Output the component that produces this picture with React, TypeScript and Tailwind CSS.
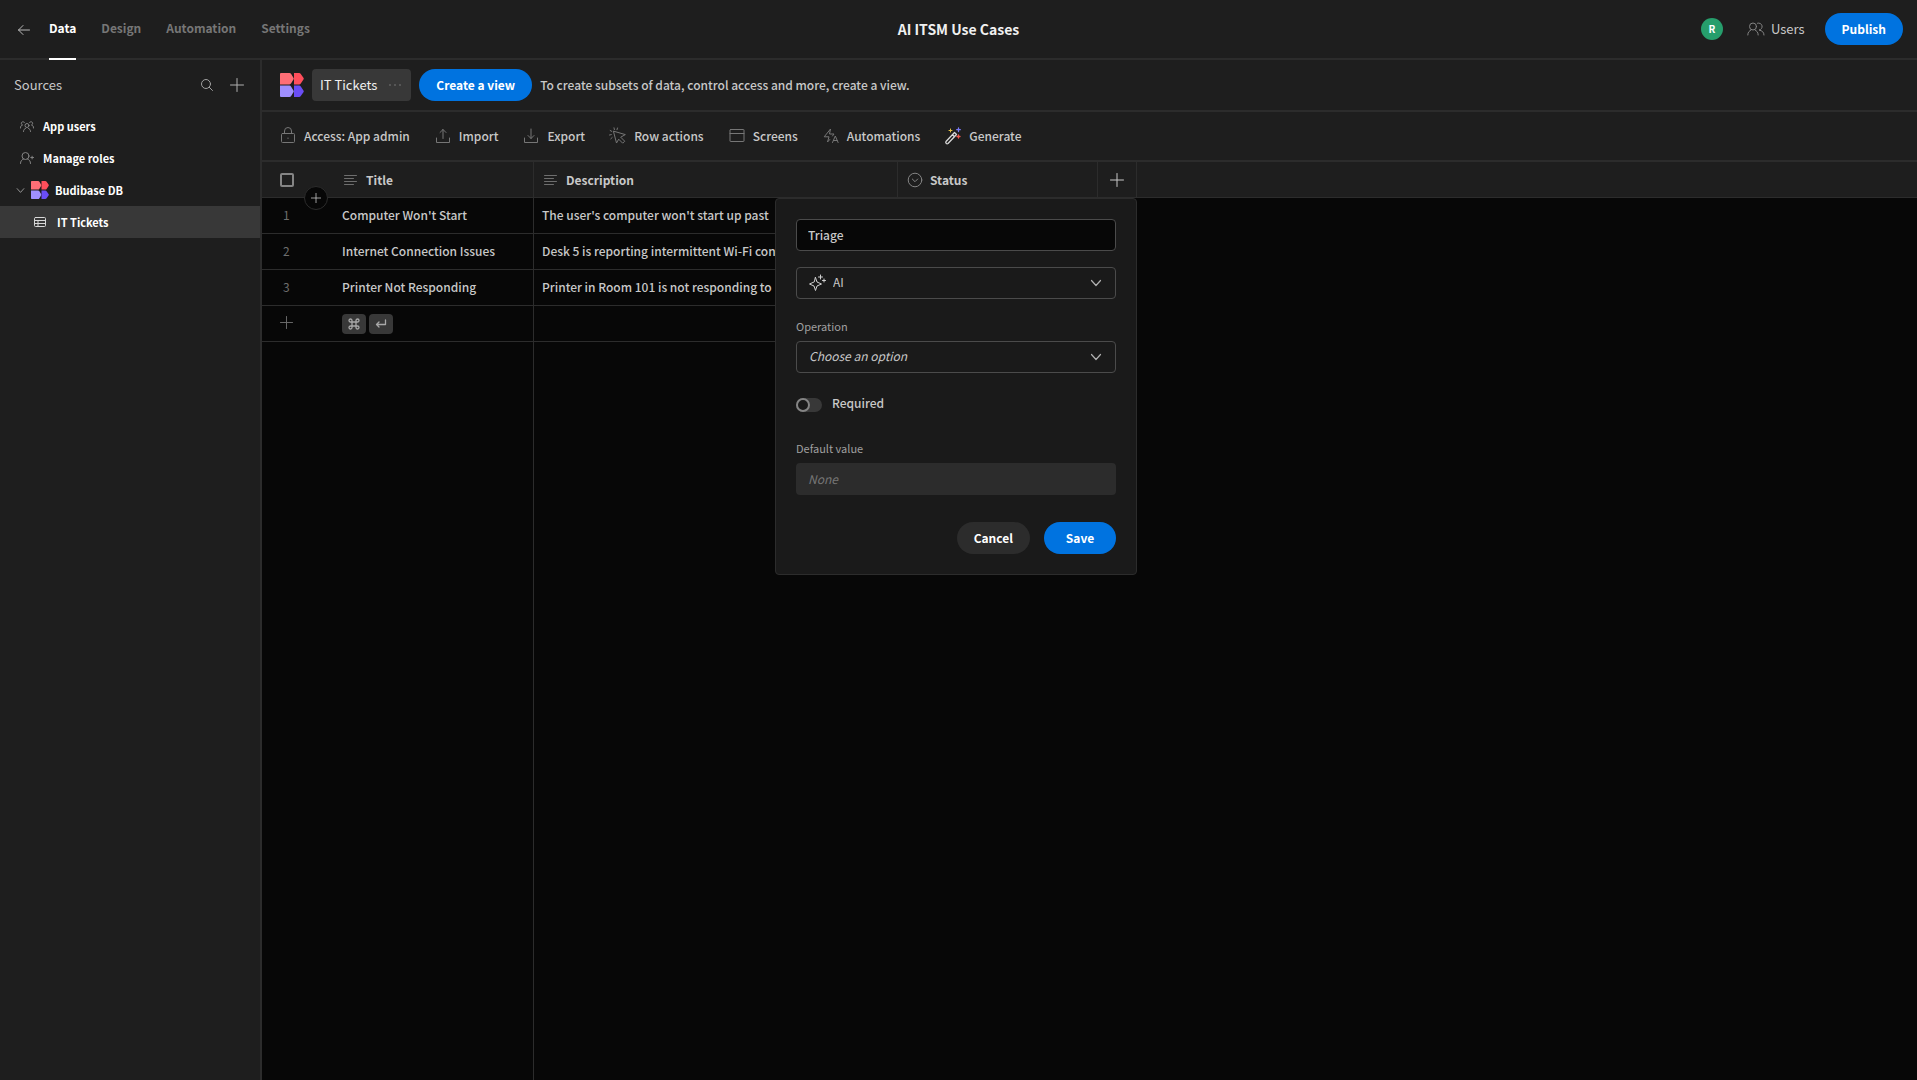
import { useState, type ReactNode } from "react";

function Glyph({ size, box = 20, className = "", children }: { size: string; box?: number; className?: string; children: ReactNode }) {
  return (
    <svg
      viewBox={`0 0 ${box} ${box}`}
      className={`shrink-0 ${size} ${className}`}
      fill="none"
      stroke="currentColor"
      strokeWidth="1"
      strokeLinecap="round"
      strokeLinejoin="round"
      aria-hidden="true"
    >
      {children}
    </svg>
  );
}

function Logo({ size }: { size: string }) {
  return (
    <svg viewBox="0 0 24 24" className={`shrink-0 ${size}`} aria-hidden="true">
      <path d="M0 1 Q0 0 1 0 H9.500 Q10.500 0 11 .8 L13.600 5 Q14 5.700 13.600 6.300 L11 10.600 Q10.500 11.400 9.500 11.400 H0 Z" fill="#ff6e76" />
      <path d="M14 0 H19 Q20.200 0 20.800 .9 L23.600 5 Q24 5.700 23.600 6.300 L20.800 10.500 Q20.200 11.400 19 11.400 H14 Z" fill="#ff4e5b" />
      <path d="M0 12.600 H9.500 Q10.500 12.600 11 13.400 L13.600 17.700 Q14 18.300 13.600 19 L11 23.200 Q10.500 24 9.500 24 H1 Q0 24 0 23 Z" fill="#9f8fff" />
      <path d="M14 12.600 H19 Q20.200 12.600 20.800 13.500 L23.600 17.700 Q24 18.300 23.600 19 L20.800 23.100 Q20.200 24 19 24 H14 Z" fill="#6a4df5" />
    </svg>
  );
}

const Plus = ({ size, className }: { size: string; className?: string }) => (
  <Glyph size={size} box={14} className={className}><path d="M7 .5v13M.5 7h13" /></Glyph>
);
const Chevron = ({ size, className }: { size: string; className?: string }) => (
  <Glyph size={size} box={12} className={className}><path strokeWidth="1.200" d="M1.500 3.500 6 8.500l4.500-5" /></Glyph>
);
const TextLines = () => (
  <Glyph size="size-4" box={16} className="text-[#6e6e6e]"><path d="M1.500 3.500h12M1.500 6.500h9M1.500 9.500h12M1.500 12.500h9" /></Glyph>
);

const tools: { label: string; icon: ReactNode }[] = [
  { label: "Access: App admin", icon: <><rect x="3.500" y="7.500" width="13" height="9" rx="1" /><path d="M6.500 7.500V5a3.500 3.500 0 0 1 7 0v2.500M10 12v.5" /></> },
  { label: "Import", icon: <path d="M3.500 12v4.500h13V12M10 12.500v-9M7 6.500l3-3 3 3" /> },
  { label: "Export", icon: <path d="M3.500 12v4.500h13V12M10 3v9.500M7 9.500l3 3 3-3" /> },
  { label: "Row actions", icon: <path d="M5.500 5.500l3 11.500 2.200-3.800 4 4 2-2-4-4L17 8.800zM9.500 2 9 3.700M6 1.800l.4 1.800M2.200 4.500l1.600.9M1.500 9l1.800-.4M2.800 12.800l1.400-1.300" /> },
  { label: "Screens", icon: <><rect x="3" y="3.500" width="14" height="12" rx=".5" /><path d="M3 7.500h14" /></> },
  { label: "Automations", icon: <path d="M8.800 13.500 6.500 16 8 10.800H3.200L9.500 3 8.500 8H13l-1.500 2M11.500 16.500l2.800-6.500 2.800 6.500M12.500 14.500h3.600" /> },
];

const rows = [
  ["1", "Computer Won't Start", "The user's computer won't start up past"],
  ["2", "Internet Connection Issues", "Desk 5 is reporting intermittent Wi-Fi connection"],
  ["3", "Printer Not Responding", "Printer in Room 101 is not responding to"],
];

const pill = "flex h-8 items-center justify-center rounded-full px-[17px] text-[12px] font-bold text-white";

function ColumnEditor() {
  const [name, setName] = useState("Triage");
  return (
    <form className="absolute top-full -right-px z-10 mt-px flex w-[362px] flex-col rounded border border-[#2c2c2c] bg-[#1a1a1a] p-5 text-left text-[12px] leading-5 font-normal text-[#c8c8c8]">
      <input aria-label="Column name" value={name} onChange={(e) => setName(e.target.value)} className="h-8 w-full rounded border border-[#4b4b4b] bg-[#070707] px-[11px] pb-[2px] font-medium outline-none" />
      <div className="relative mt-4 flex items-center">
        <Glyph size="size-[18px]" box={18} className="pointer-events-none absolute left-3 text-[#d0d0d0]">
          <path d="M7.500 3.500 9 8l4.500 2L9 12l-1.500 4.500L6 12l-4.500-2L6 8zM12.500 1v4M10.500 3h4M16 5v3M14.500 6.500h3" />
        </Glyph>
        <select aria-label="Type" className="h-8 w-full appearance-none rounded border border-[#4b4b4b] bg-[#1a1a1a] pb-[2px] pl-9 outline-none">
          <option>AI</option>
        </select>
        <Chevron size="size-3" className="pointer-events-none absolute right-[14px] text-[#b0b0b0]" />
      </div>
      <label htmlFor="operation" className="mt-[17px] text-[11px] text-[#a0a0a0]">Operation</label>
      <div className="relative mt-[5px] flex items-center">
        <select id="operation" className="h-8 w-full appearance-none rounded border border-[#4b4b4b] bg-[#1a1a1a] px-3 pb-[2px] italic outline-none">
          <option>Choose an option</option>
        </select>
        <Chevron size="size-3" className="pointer-events-none absolute right-[14px] text-[#b0b0b0]" />
      </div>
      <label className="mt-[18px] flex h-6 items-center gap-[10px] font-medium">
        <input type="checkbox" role="switch" className="mt-[3px] h-[14px] w-[26px] appearance-none rounded-full bg-[#383838] before:block before:size-[14px] before:rounded-full before:border-2 before:border-[#848484] before:bg-[#1a1a1a]" />
        Required
      </label>
      <label htmlFor="default" className="mt-[23px] text-[11px] text-[#a0a0a0]">Default value</label>
      <input id="default" placeholder="None" disabled className="mt-[5px] h-8 w-full rounded bg-[#2c2c2c] px-3 pb-[2px] italic placeholder:text-[#767676]" />
      <div className="mt-[27px] flex justify-end gap-[14px]">
        <button type="button" className={`${pill} bg-[#2c2c2c]`}>Cancel</button>
        <button type="button" className={`${pill} w-18 bg-[#0073e0]`}>Save</button>
      </div>
    </form>
  );
}

const navItem = "flex h-8 w-full items-center text-left text-[11px] font-bold text-white";
const th = "relative border-b border-[#2c2c2c] p-0 text-left font-bold";
const cell = "border-b border-[#2c2c2c] p-0 pb-[2px]";

export default function App() {
  return (
    <div className="flex min-h-screen flex-col bg-[#070707] font-['Noto_Sans_CJK_SC',sans-serif] text-[13px] leading-5 text-[#c8c8c8]">
      <header className="grid h-15 grid-cols-[1fr_auto_1fr] border-b-2 border-[#2c2c2c] bg-[#1e1e1e]">
        <div className="flex items-center pl-[18px]">
          <button aria-label="Back" className="mr-[19px]">
            <Glyph size="size-3" box={12} className="mt-[2px] text-[#b8b8b8]"><path d="M11.500 6H.5M5 1.500.5 6 5 10.500" /></Glyph>
          </button>
          <nav className="-mb-[2px] flex h-15 gap-[25px] text-[12px] font-bold text-[#767676]">
            <a href="#data" className="flex items-center border-b-2 border-white pb-[2px] text-white">Data</a>
            <a href="#design" className="flex items-center pb-1">Design</a>
            <a href="#automation" className="flex items-center pb-1">Automation</a>
            <a href="#settings" className="flex items-center pb-1">Settings</a>
          </nav>
        </div>
        <h1 className="self-center text-[14px] font-bold text-[#f0f0f0]">AI ITSM Use Cases</h1>
        <div className="flex items-center justify-end pr-[14px]">
          <span className="flex size-[22px] items-center justify-center rounded-full bg-[#269e6c] text-[10px] font-bold text-white">R</span>
          <button className="mr-5 ml-6 flex items-center gap-[6px]">
            <Glyph size="size-[18px]" box={18} className="text-[#848484]">
              <circle cx="6" cy="6.500" r="3.500" /><path d="M.8 15c0-3 1.500-4 3.200-5M8 10c1.700 1 3.200 2 3.200 5M10.500 3.200a3.500 3.500 0 1 1 1.500 6.800c3 .7 5 2 5 5" />
            </Glyph>
            Users
          </button>
          <button className={`${pill} bg-[#0073e0]`}>Publish</button>
        </div>
      </header>

      <div className="flex flex-1">
        <aside className="w-[262px] shrink-0 border-r-2 border-[#2c2c2c] bg-[#1e1e1e]">
          <div className="flex h-[50px] items-center pr-4 pl-[14px]">
            <h2 className="flex-1">Sources</h2>
            <button aria-label="Search" className="mr-[17px]">
              <Glyph size="size-3" box={12} className="text-[#a0a0a0]"><circle cx="5" cy="5" r="4.500" /><path d="m8.300 8.300 3.200 3.200" /></Glyph>
            </button>
            <button aria-label="Add source"><Plus size="size-[14px]" className="text-[#b0b0b0]" /></button>
          </div>
          <nav>
            <button className={`${navItem} gap-[9px] pl-5`}>
              <Glyph size="size-[14px]" box={14} className="text-[#848484]"><circle cx="7" cy="6.500" r="2" /><path d="M3.500 12.500c0-2 1-2.500 2-3M10.500 12.500c0-2-1-2.500-2-3M4.500 3.500a1.700 1.700 0 1 0-2 2.500C1.200 6.500.5 7 .5 9M9.500 3.500a1.700 1.700 0 1 1 2 2.500c1.300.5 2 1 2 3" /></Glyph>
              App users
            </button>
            <button className={`${navItem} gap-[9px] pl-5`}>
              <Glyph size="size-[14px]" box={14} className="text-[#848484]"><circle cx="5.500" cy="5" r="3.500" /><path d="M.5 12.500c0-2.500 1-3.500 3-4.500M7.500 8c2 1 3 2 3 4.500M10.800 6.500h2.700M12.100 5.200v2.700" /></Glyph>
              Manage roles
            </button>
            <button className={`${navItem} gap-[6px] pl-4`}>
              <Chevron size="size-[9px]" className="text-[#a0a0a0]" />
              <Logo size="size-[18px]" />
              Budibase DB
            </button>
            <button className={`${navItem} gap-[11px] bg-[#383838] pl-[34px]`}>
              <Glyph size="size-3" box={12} className="text-[#d8d8d8]"><rect x=".5" y="1.500" width="11" height="9" rx="1" /><path d="M.5 4.500h11M.5 7.500h11M4 4.500v6" /></Glyph>
              IT Tickets
            </button>
          </nav>
        </aside>

        <main className="flex min-w-0 flex-1 flex-col">
          <div className="flex h-[52px] items-center border-b-2 border-[#2c2c2c] bg-[#1e1e1e] pl-[18px]">
            <Logo size="size-6" />
            <div className="mx-2 flex h-8 items-center gap-3 rounded bg-[#383838] pr-[10px] pl-2 text-[#f0f0f0]">
              IT Tickets
              <button aria-label="More options">
                <Glyph size="size-3" box={12} className="text-[#848484]"><path strokeWidth="1.500" d="M1 6h.01M6 6h.01M11 6h.01" /></Glyph>
              </button>
            </div>
            <button className={`${pill} mr-2 bg-[#0073e0]`}>Create a view</button>
            <p className="text-[12px] font-medium">To create subsets of data, control access and more, create a view.</p>
          </div>
          <div className="flex h-[50px] items-center gap-[23px] border-b-2 border-[#2c2c2c] bg-[#1e1e1e] pb-px pl-4 text-[12px] font-medium">
            {tools.map((t) => (
              <button key={t.label} className="flex items-center gap-[6px]">
                <Glyph size="size-5" className="text-[#767676]">{t.icon}</Glyph>
                {t.label}
              </button>
            ))}
            <button className="flex items-center gap-[6px]">
              <Glyph size="size-5">
                <path d="M3 15.500 11.500 6.500l2 2L5 17.500q-1 .7-1.800-.1T3 15.500zM9.500 8.800l2 2" stroke="#d8d8d8" strokeWidth="1.300" />
                <path d="M7.500 3v3M6 4.500h3" stroke="#e8c341" />
                <path d="M15.500 2v3.500M13.700 3.700h3.600" stroke="#7a7af5" strokeWidth="1.300" />
                <path d="M15.500 9v3M14 10.500h3" stroke="#f0594e" strokeWidth="1.300" />
              </Glyph>
              Generate
            </button>
          </div>

          <table className="w-full table-fixed border-separate border-spacing-0 text-[12px]">
            <colgroup>
              <col className="w-[72px]" /><col className="w-[200px]" /><col className="w-[364px]" /><col className="w-[200px]" /><col className="w-[39px]" /><col />
            </colgroup>
            <thead className="bg-[#1e1e1e]">
              <tr className="h-9">
                <th className={th}>
                  <input type="checkbox" aria-label="Select all rows" className="ml-[18px] block size-[14px] appearance-none rounded-xs border-2 border-[#848484]" />
                  <button aria-label="Insert row" className="absolute right-[6px] -bottom-[13px] z-10 flex size-6 items-center justify-center rounded-full border border-[#2c2c2c] bg-[#070707]">
                    <Plus size="size-[10px]" className="text-[#d8d8d8]" />
                  </button>
                </th>
                <th className={`${th} border-r`}><span className="flex items-center gap-[7px] pl-[9px]"><TextLines />Title</span></th>
                <th className={`${th} border-r`}><span className="flex items-center gap-[7px] pl-[9px]"><TextLines />Description</span></th>
                <th className={`${th} border-r`}>
                  <span className="flex items-center gap-[7px] pl-[9px]">
                    <Glyph size="size-4" box={16} className="text-[#848484]"><circle cx="8" cy="8" r="6.800" /><path d="m5.300 7 2.700 2.700L10.700 7" /></Glyph>
                    Status
                  </span>
                </th>
                <th className={`${th} border-r`}>
                  <button aria-label="Add column" className="flex w-full justify-center"><Plus size="size-[14px]" className="text-[#c8c8c8]" /></button>
                  <ColumnEditor />
                </th>
                <th className={th} aria-hidden="true" />
              </tr>
            </thead>
            <tbody className="font-medium">
              {rows.map(([n, title, text]) => (
                <tr key={n} className="h-9">
                  <td className={`${cell} pl-[21px] font-normal text-[#6e6e6e]`}>{n}</td>
                  <td className={`${cell} truncate border-r pl-2`}>{title}</td>
                  <td className={`${cell} overflow-hidden pl-2 whitespace-nowrap`}>{text}</td>
                  <td className={cell} />
                </tr>
              ))}
              <tr className="h-9">
                <td className={`${cell} pl-[18px]`}>
                  <button aria-label="Add row" className="block"><Plus size="size-[13px]" className="text-[#6e6e6e]" /></button>
                </td>
                <td className="border-r border-b border-[#2c2c2c] p-0 pl-2">
                  <span className="flex gap-[3px] text-[#a8a8a8]">
                    <kbd className="flex h-5 w-6 items-center justify-center rounded bg-[#383838]">
                      <Glyph size="size-3" box={12}><path strokeWidth="1.300" d="M4 4H2.500A1.500 1.500 0 1 1 4 2.500v7A1.500 1.500 0 1 1 2.500 8h7A1.500 1.500 0 1 1 8 9.500v-7A1.500 1.500 0 1 1 9.500 4z" /></Glyph>
                    </kbd>
                    <kbd className="flex h-5 w-6 items-center justify-center rounded bg-[#383838]">
                      <Glyph size="size-3" box={12}><path strokeWidth="1.300" d="M10.500 2v4.500h-9M4 4 1.500 6.500 4 9" /></Glyph>
                    </kbd>
                  </span>
                </td>
                <td className={cell} />
                <td className={cell} />
              </tr>
            </tbody>
          </table>
          <div className="w-[272px] flex-1 border-r border-[#2c2c2c]" />
        </main>
      </div>
    </div>
  );
}
